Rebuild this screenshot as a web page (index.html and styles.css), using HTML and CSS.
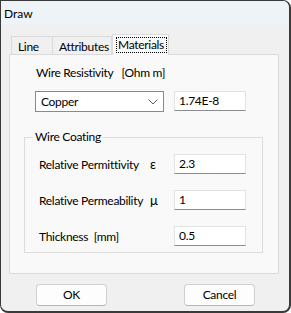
FILE: index.html
```html
<!DOCTYPE html>
<html lang="en">
<head>
<meta charset="UTF-8">
<title>Draw</title>
<link rel="stylesheet" href="styles.css">
</head>
<body>
  <div class="window">
    <div class="titlebar">Draw</div>

    <div class="client">
      <div class="tabs">
        <div class="tab tab-line">Line</div>
        <div class="tab tab-attr">Attributes</div>
        <div class="tab tab-mat active"><span class="focus">Materials</span></div>
      </div>

      <div class="panel">
        <div class="section-label">Wire Resistivity&nbsp;&nbsp; [Ohm m]</div>
        <div class="resist-row">
          <div class="combo">
            <span>Copper</span>
            <svg class="chevron" width="10" height="6" viewBox="0 0 10 6"><path d="M0.5 0.5 L5 5 L9.5 0.5" fill="none" stroke="#606060" stroke-width="1"/></svg>
          </div>
          <div class="field">1.74E-8</div>
        </div>

        <fieldset class="group">
          <legend>Wire Coating</legend>
          <div class="grid">
            <div class="label">Relative Permittivity</div>
            <div class="sym">ε</div>
            <div class="field">2.3</div>

            <div class="label">Relative Permeability</div>
            <div class="sym">μ</div>
            <div class="field">1</div>

            <div class="label">Thickness&nbsp;&nbsp;[mm]</div>
            <div class="sym"></div>
            <div class="field">0.5</div>
          </div>
        </fieldset>
      </div>

      <div class="buttons">
        <div class="btn">OK</div>
        <div class="btn">Cancel</div>
      </div>
    </div>
  </div>
</body>
</html>
```

FILE: styles.css
```css
* {
  margin: 0;
  padding: 0;
  box-sizing: border-box;
}

body {
  background: #ffffff;
  font-family: Lato, 'Liberation Sans', sans-serif;
  font-size: 12px;
  letter-spacing: -0.3px;
  color: #000;
  white-space: nowrap;
}

.window {
  width: 291px;
  height: 313px;
  background: #f0f0f0;
  border: 1px solid #3a3a3a;
  border-right-width: 2px;
  border-bottom-width: 2px;
  border-radius: 0 8px 8px 8px;
  overflow: hidden;
  display: flex;
  flex-direction: column;
}

.titlebar {
  height: 24px;
  background: #eef3f8;
  padding-left: 3px;
  padding-top: 5px;
  line-height: 16px;
  letter-spacing: 0;
}

.client {
  padding: 9px 10px 0 8px;
}

.tabs {
  display: flex;
  align-items: flex-end;
  height: 20px;
  padding-left: 2px;
  position: relative;
  z-index: 1;
}

.tab {
  height: 18px;
  border: 1px solid #dadada;
  border-bottom: none;
  background: #f0f0f0;
  padding: 2px 0 0 6px;
  line-height: 15px;
}

.tab-line {
  width: 42px;
}

.tab-attr {
  width: 59px;
  border-left: none;
}

.tab-mat {
  width: 57px;
}

.tab.active {
  height: 21px;
  margin-bottom: -1px;
  background: #f9f9f9;
  border-left: 1px solid #dadada;
  padding: 2px 0 0 3px;
}

.focus {
  display: inline-block;
  border: 1px dotted #000;
  padding: 0 2px 0 1px;
  line-height: 14px;
}

.panel {
  height: 220px;
  background: #f9f9f9;
  border: 1px solid #dadada;
  padding: 10px 0 0 14px;
}

.section-label {
  padding-left: 12px;
  line-height: 16px;
}

.resist-row {
  display: flex;
  gap: 10px;
  margin-top: 10px;
  padding-left: 11px;
}

.combo {
  width: 129px;
  height: 21px;
  background: #fff;
  border: 1px solid #8a8a8a;
  display: flex;
  align-items: center;
  justify-content: space-between;
  padding: 0 5px 0 5px;
}

.chevron {
  margin-top: 1px;
}

.field {
  width: 72px;
  height: 20px;
  background: #fff;
  border: 1px solid #e2e2e2;
  border-bottom-color: #8d8d8d;
  padding-left: 4px;
  line-height: 18px;
}

.group {
  width: 239px;
  height: 123px;
  margin-top: 18px;
  border: 1px solid #dcdcdc;
  padding: 10px 0 0 14px;
}

.group legend {
  margin-left: -6px;
  padding: 0 2px;
  line-height: 14px;
}

.grid {
  display: grid;
  grid-template-columns: 111px 24px 72px;
  row-gap: 16px;
  align-items: center;
}

.sym {
  font-size: 13px;
}

.buttons {
  display: flex;
  gap: 77px;
  padding: 10px 0 0 27px;
}

.btn {
  width: 71px;
  height: 22px;
  background: #fdfdfd;
  border: 1px solid #d0d0d0;
  border-bottom-color: #b5b5b5;
  border-radius: 4px;
  text-align: center;
  line-height: 20px;
}
```
